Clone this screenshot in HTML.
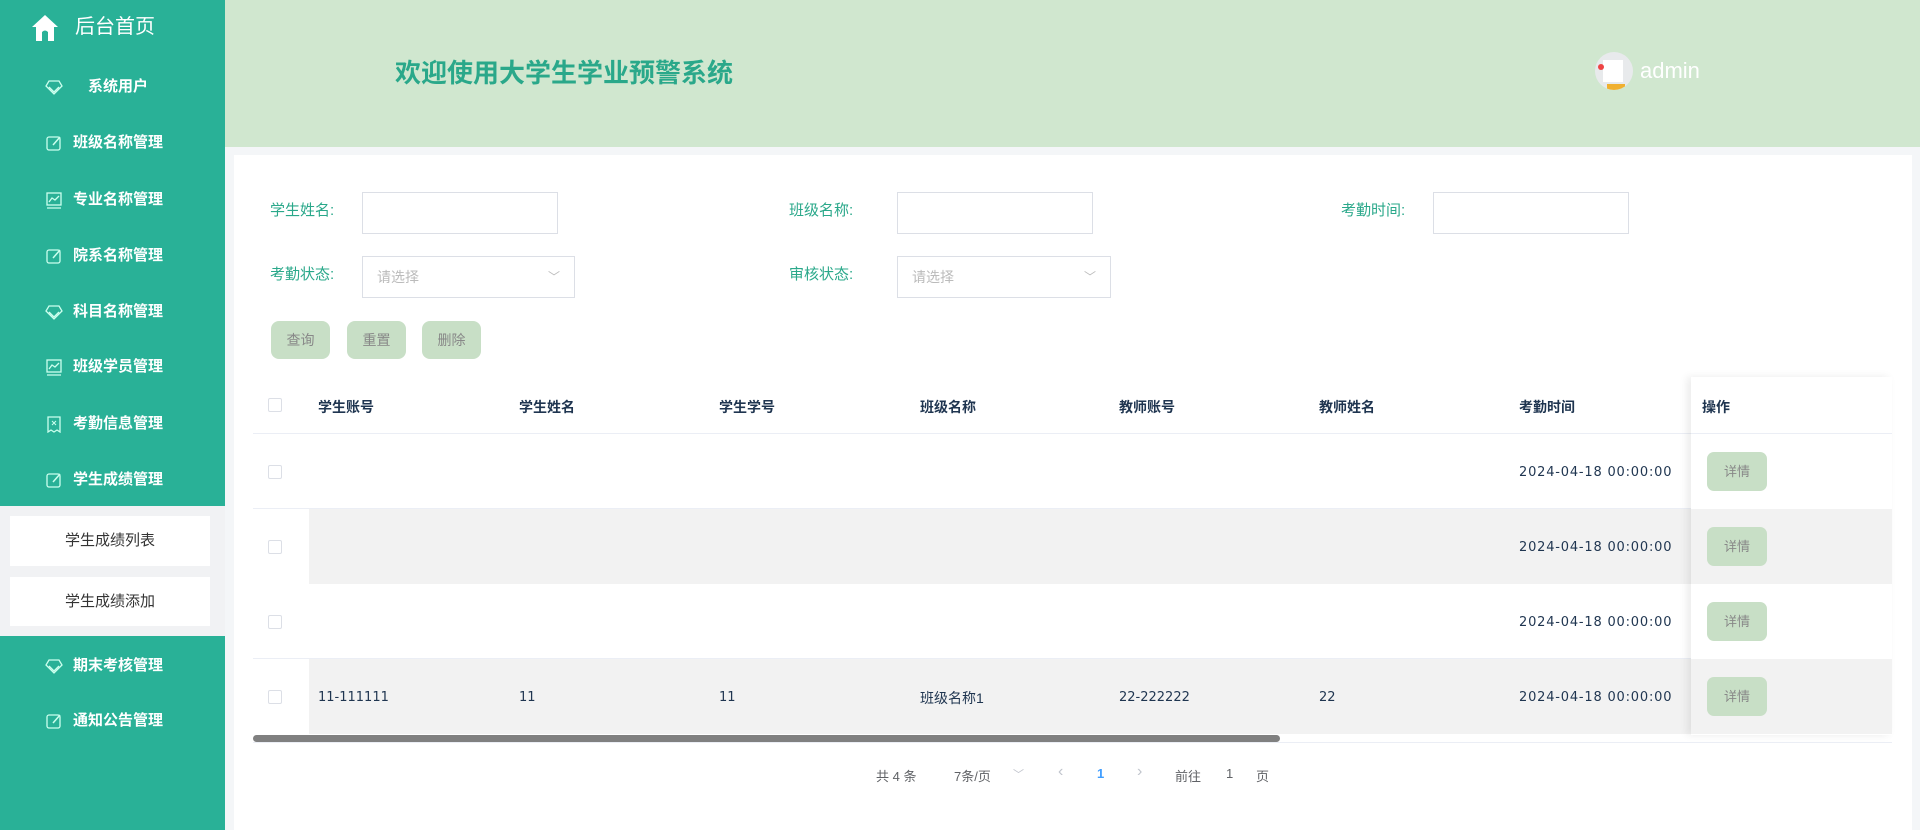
<!DOCTYPE html>
<html><head><meta charset="utf-8"><style>
*{margin:0;padding:0;box-sizing:border-box}
body{width:1920px;height:830px;overflow:hidden;background:#f4f6f8;font-family:"Liberation Sans","Noto Sans CJK SC",sans-serif;position:relative}
.abs{position:absolute}
#side{left:0;top:0;width:225px;height:830px;background:#29b197}
.mi{position:absolute;left:0;width:225px;color:#fff;font-weight:bold;font-size:15px;line-height:20px}
.mi svg{position:absolute;left:45px;top:1px}
.mi span{position:absolute;left:73px;top:0;white-space:nowrap}
#hdr{left:225px;top:0;width:1695px;height:147px;background:#d0e7cf}
.card{left:234px;top:155px;width:1678px;height:675px;background:#fff}
.lbl{position:absolute;color:#2aa88a;font-size:15px;line-height:20px}
.inp{position:absolute;border:1px solid #dcdfe6;background:#fff;height:42px}
.sel{color:#bbb;font-size:14px;line-height:40px;padding-left:14px}
.btn{position:absolute;top:321px;width:59px;height:38px;background:#c8dfc6;border-radius:8px;color:#888;font-size:14px;line-height:38px;text-align:center}
.th{position:absolute;top:397px;font-weight:bold;font-size:14px;color:#1f3550}
.row{position:absolute;left:253px;width:1639px;height:75px}
.cb{position:absolute;left:268px;width:14px;height:14px;border:1px solid #dcdfe6;border-radius:2px;background:#fff}
.td{position:absolute;font-family:"DejaVu Sans","Noto Sans CJK SC",sans-serif;font-size:13px;color:#1f3550;line-height:16px}
.dt{letter-spacing:0.8px}
.det{position:absolute;left:1707px;width:60px;height:39px;background:#c8dfc6;border-radius:7px;color:#888;font-size:13px;line-height:39px;text-align:center}
.pg{position:absolute;top:766px;font-size:13px;color:#606266}
</style></head><body>
<div id="side" class="abs">
 <svg class="abs" style="left:30px;top:13px" width="30" height="30" viewBox="0 0 30 30"><path d="M15 2 L2 14 L6 14 L6 28 L12 28 L12 19 Q15 16 18 19 L18 28 L24 28 L24 14 L28 14 Z" fill="#fff"/></svg>
 <div class="abs" style="left:75px;top:14px;color:#fff;font-size:20px;line-height:26px">后台首页</div>
 <div class="mi" style="top:77px"><svg width="18" height="18" viewBox="0 0 18 18"><path d="M4 3h10l3 5-8 8-8-8z M4 9l5 5 5-5" fill="none" stroke="#cfe" stroke-width="1.3"/></svg><span style="left:88px">系统用户</span></div>
 <div class="mi" style="top:133px"><svg width="18" height="18"><rect x="2" y="3" width="13" height="13" rx="2" fill="none" stroke="#cfe" stroke-width="1.3"/><path d="M8 11l7-8" stroke="#cfe" stroke-width="1.5"/></svg><span>班级名称管理</span></div>
 <div class="mi" style="top:190px"><svg width="18" height="18"><rect x="2" y="2" width="14" height="12" fill="none" stroke="#cfe" stroke-width="1.3"/><path d="M4 11l3-4 3 2 4-4M2 17h14" fill="none" stroke="#cfe" stroke-width="1.3"/></svg><span>专业名称管理</span></div>
 <div class="mi" style="top:246px"><svg width="18" height="18"><rect x="2" y="3" width="13" height="13" rx="2" fill="none" stroke="#cfe" stroke-width="1.3"/><path d="M8 11l7-8" stroke="#cfe" stroke-width="1.5"/></svg><span>院系名称管理</span></div>
 <div class="mi" style="top:302px"><svg width="18" height="18" viewBox="0 0 18 18"><path d="M4 3h10l3 5-8 8-8-8z M4 9l5 5 5-5" fill="none" stroke="#cfe" stroke-width="1.3"/></svg><span>科目名称管理</span></div>
 <div class="mi" style="top:357px"><svg width="18" height="18"><rect x="2" y="2" width="14" height="12" fill="none" stroke="#cfe" stroke-width="1.3"/><path d="M4 11l3-4 3 2 4-4M2 17h14" fill="none" stroke="#cfe" stroke-width="1.3"/></svg><span>班级学员管理</span></div>
 <div class="mi" style="top:414px"><svg width="18" height="18"><path d="M3 2h12v15l-3-2-3 2-3-2-3 2z" fill="none" stroke="#cfe" stroke-width="1.3"/><path d="M7 6l4 4M11 6l-4 4" stroke="#cfe"/></svg><span>考勤信息管理</span></div>
 <div class="mi" style="top:470px"><svg width="18" height="18"><rect x="2" y="3" width="13" height="13" rx="2" fill="none" stroke="#cfe" stroke-width="1.3"/><path d="M8 11l7-8" stroke="#cfe" stroke-width="1.5"/></svg><span>学生成绩管理</span></div>
 <div class="abs" style="left:0;top:506px;width:225px;height:130px;background:#f1f2f4"></div>
 <div class="abs" style="left:10px;top:516px;width:200px;height:50px;background:#fff;color:#333;font-size:15px;line-height:50px;text-align:center">学生成绩列表</div>
 <div class="abs" style="left:10px;top:577px;width:200px;height:49px;background:#fff;color:#333;font-size:15px;line-height:49px;text-align:center">学生成绩添加</div>
 <div class="mi" style="top:656px"><svg width="18" height="18" viewBox="0 0 18 18"><path d="M4 3h10l3 5-8 8-8-8z M4 9l5 5 5-5" fill="none" stroke="#cfe" stroke-width="1.3"/></svg><span>期末考核管理</span></div>
 <div class="mi" style="top:711px"><svg width="18" height="18"><rect x="2" y="3" width="13" height="13" rx="2" fill="none" stroke="#cfe" stroke-width="1.3"/><path d="M8 11l7-8" stroke="#cfe" stroke-width="1.5"/></svg><span>通知公告管理</span></div>
</div>
<div id="hdr" class="abs">
 <div class="abs" style="left:170px;top:57px;font-size:26px;font-weight:bold;color:#2aa88a;line-height:32px">欢迎使用大学生学业预警系统</div>
 <div class="abs" style="left:1370px;top:52px;width:38px;height:38px;border-radius:50%;background:#e8eaec;overflow:hidden"><div class="abs" style="left:8px;top:8px;width:20px;height:22px;background:#fff"></div><div class="abs" style="left:3px;top:12px;width:6px;height:6px;border-radius:50%;background:#e44"></div><div class="abs" style="left:12px;top:32px;width:18px;height:6px;background:#f0b030"></div></div>
 <div class="abs" style="left:1415px;top:57px;color:#fff;font-size:22px;line-height:28px">admin</div>
</div>
<div class="abs card"></div>
<div class="lbl" style="left:270px;top:201px">学生姓名:</div>
<div class="inp" style="left:362px;top:192px;width:196px"></div>
<div class="lbl" style="left:789px;top:201px">班级名称:</div>
<div class="inp" style="left:897px;top:192px;width:196px"></div>
<div class="lbl" style="left:1341px;top:201px">考勤时间:</div>
<div class="inp" style="left:1433px;top:192px;width:196px"></div>
<div class="lbl" style="left:270px;top:265px">考勤状态:</div>
<div class="inp sel" style="left:362px;top:256px;width:213px">请选择<span style="position:absolute;right:14px;top:0;color:#bbb;font-size:12px">﹀</span></div>
<div class="lbl" style="left:789px;top:265px">审核状态:</div>
<div class="inp sel" style="left:897px;top:256px;width:214px">请选择<span style="position:absolute;right:14px;top:0;color:#bbb;font-size:12px">﹀</span></div>
<div class="btn" style="left:271px">查询</div>
<div class="btn" style="left:347px">重置</div>
<div class="btn" style="left:422px">删除</div>

<div class="abs" style="left:253px;top:433px;width:1639px;height:1px;background:#ebeef5"></div>
<div class="cb" style="top:398px"></div>
<div class="th" style="left:318px">学生账号</div>
<div class="th" style="left:519px">学生姓名</div>
<div class="th" style="left:719px">学生学号</div>
<div class="th" style="left:920px">班级名称</div>
<div class="th" style="left:1119px">教师账号</div>
<div class="th" style="left:1319px">教师姓名</div>
<div class="th" style="left:1519px">考勤时间</div>

<div class="row" style="top:434px;background:#fff;border-bottom:1px solid #ebeef5"></div>
<div class="row" style="top:509px;background:#f2f2f2"></div>
<div class="row" style="top:584px;background:#fff;border-bottom:1px solid #ebeef5"></div>
<div class="row" style="top:659px;background:#f2f2f2"></div>
<div class="abs" style="left:253px;top:509px;width:56px;height:75px;background:#fff"></div>
<div class="abs" style="left:253px;top:659px;width:56px;height:75px;background:#fff"></div>
<div class="cb" style="top:465px"></div><div class="cb" style="top:540px"></div><div class="cb" style="top:615px"></div><div class="cb" style="top:690px"></div>
<div class="td dt" style="left:1519px;top:465px">2024-04-18 00:00:00</div>
<div class="td dt" style="left:1519px;top:540px">2024-04-18 00:00:00</div>
<div class="td dt" style="left:1519px;top:615px">2024-04-18 00:00:00</div>
<div class="td dt" style="left:1519px;top:690px">2024-04-18 00:00:00</div>
<div class="td" style="left:318px;top:690px">11-111111</div>
<div class="td" style="left:519px;top:690px">11</div>
<div class="td" style="left:719px;top:690px">11</div>
<div class="td" style="left:920px;top:690px;font-family:'Liberation Sans','Noto Sans CJK SC',sans-serif;font-size:14px">班级名称1</div>
<div class="td" style="left:1119px;top:690px">22-222222</div>
<div class="td" style="left:1319px;top:690px">22</div>

<div class="abs" style="left:1691px;top:377px;width:201px;height:358px;box-shadow:-4px 0 8px rgba(0,0,0,.08)">
 <div class="abs" style="left:0;top:0;width:201px;height:57px;background:#fff;border-bottom:1px solid #ebeef5"></div>
 <div class="abs" style="left:0;top:57px;width:201px;height:75px;background:#fff"></div>
 <div class="abs" style="left:0;top:132px;width:201px;height:75px;background:#f2f2f2"></div>
 <div class="abs" style="left:0;top:207px;width:201px;height:75px;background:#fff"></div>
 <div class="abs" style="left:0;top:282px;width:201px;height:75px;background:#f2f2f2"></div>
</div>
<div class="th" style="left:1702px">操作</div>
<div class="det" style="top:452px">详情</div>
<div class="det" style="top:527px">详情</div>
<div class="det" style="top:602px">详情</div>
<div class="det" style="top:677px">详情</div>
<div class="abs" style="left:253px;top:735px;width:1027px;height:7px;border-radius:4px;background:#808080"></div>
<div class="abs" style="left:253px;top:742px;width:1639px;height:1px;background:#ebeef5"></div>

<div class="pg" style="left:876px">共 4 条</div>
<div class="pg" style="left:954px">7条/页</div>
<div class="pg" style="left:1013px;color:#c0c4cc;font-size:11px">﹀</div>
<div class="pg" style="left:1058px;color:#c0c4cc;font-size:16px;top:763px">‹</div>
<div class="pg" style="left:1097px;color:#409eff;font-weight:bold">1</div>
<div class="pg" style="left:1137px;color:#c0c4cc;font-size:16px;top:763px">›</div>
<div class="pg" style="left:1175px">前往</div>
<div class="pg" style="left:1226px">1</div>
<div class="pg" style="left:1256px">页</div>
</body></html>
